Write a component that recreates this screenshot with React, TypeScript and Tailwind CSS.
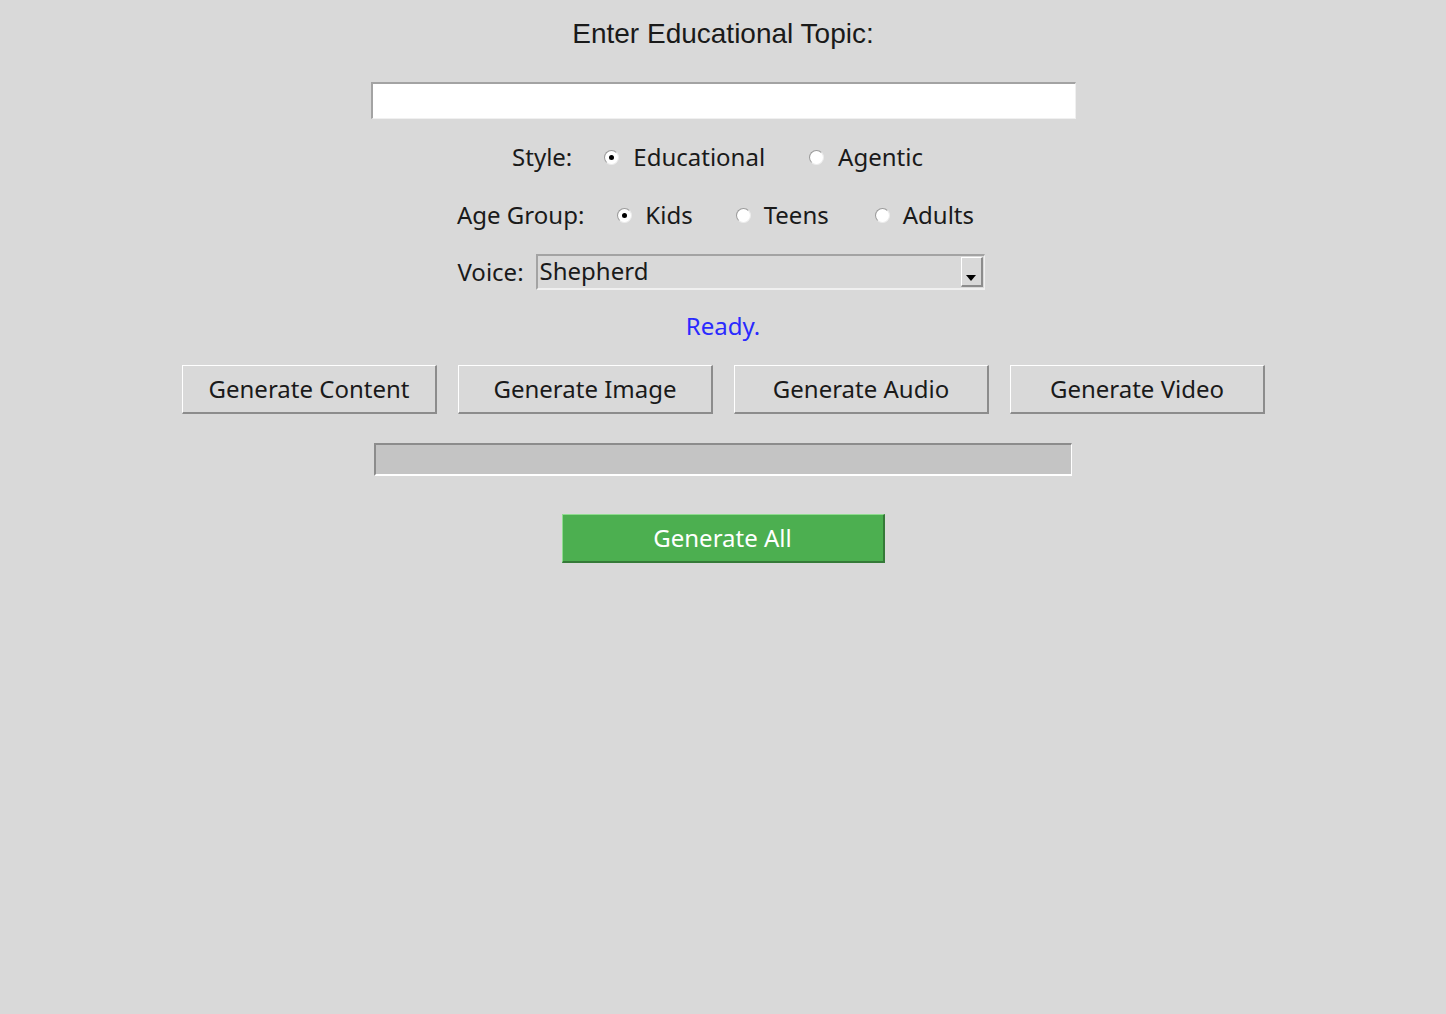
import React from "react";

const Radio = ({ checked }: { checked?: boolean }) => (
  <span className="relative inline-block w-[15px] h-[15px] rounded-full bg-white border border-t-[#9a9a9a] border-l-[#9a9a9a] border-r-[#ececec] border-b-[#ececec]">
    {checked && <span className="absolute left-[4px] top-[4px] w-[5px] h-[5px] rounded-full bg-black" />}
  </span>
);

const Btn = ({ label }: { label: string }) => (
  <div className="w-[255px] h-[49px] flex items-center justify-center bg-[#d9d9d9] border-t border-l border-t-white border-l-white border-r-2 border-b-2 border-r-[#8c8c8c] border-b-[#8c8c8c] text-[24px] text-[#1a1a1a]">
    {label}
  </div>
);

export default function App() {
  return (
    <div
      className="w-[1446px] h-[1014px] bg-[#d9d9d9] flex flex-col items-center text-[#1a1a1a]"
      style={{ fontFamily: '"Noto Sans", sans-serif' }}
    >
      <div
        className="mt-[17px] h-[34px] leading-[34px] text-[28px] text-[#1a1a1a]"
        style={{ fontFamily: '"Liberation Sans", Arial, sans-serif' }}
      >
        Enter Educational Topic:
      </div>
      <div className="mt-[31px] w-[705px] h-[37px] bg-white border-t-2 border-l-2 border-t-[#a3a3a3] border-l-[#a3a3a3] border-b border-r border-b-[#f0f0f0] border-r-[#f0f0f0]" />
      <div className="mt-[21px] h-[34px] flex items-center text-[24px] ml-[-11px]">
        <span>Style:</span>
        <span className="ml-[32px] flex items-center"><Radio checked /></span>
        <span className="ml-[14px]">Educational</span>
        <span className="ml-[44px] flex items-center"><Radio /></span>
        <span className="ml-[14px]">Agentic</span>
      </div>
      <div className="mt-[24px] h-[34px] flex items-center text-[24px] ml-[-15px]">
        <span>Age Group:</span>
        <span className="ml-[33px] flex items-center"><Radio checked /></span>
        <span className="ml-[13px]">Kids</span>
        <span className="ml-[43px] flex items-center"><Radio /></span>
        <span className="ml-[13px]">Teens</span>
        <span className="ml-[46px] flex items-center"><Radio /></span>
        <span className="ml-[13px]">Adults</span>
      </div>
      <div className="mt-[22px] flex items-center text-[24px] ml-[-4px]">
        <span>Voice:</span>
        <div className="ml-[12px] w-[449px] h-[36px] flex items-stretch bg-[#d9d9d9] border-t-2 border-l-2 border-t-[#a3a3a3] border-l-[#a3a3a3] border-b-2 border-r border-b-[#f0f0f0] border-r-[#f0f0f0]">
          <div className="flex-1 pl-[2px] leading-[30px]">Shepherd</div>
          <div className="w-[22px] my-[1px] mr-[1px] flex items-end justify-center pb-[4px] border-l border-t border-l-white border-t-white border-r-2 border-b-2 border-r-[#8c8c8c] border-b-[#8c8c8c]">
            <svg width="10" height="6" viewBox="0 0 10 6"><path d="M0 0h10L5 6z" fill="#000" /></svg>
          </div>
        </div>
      </div>
      <div className="mt-[19px] h-[34px] leading-[34px] text-[24px] text-[#2a2aff]">Ready.</div>
      <div className="mt-[22px] flex gap-[21px] ml-[1px]">
        <Btn label="Generate Content" />
        <Btn label="Generate Image" />
        <Btn label="Generate Audio" />
        <Btn label="Generate Video" />
      </div>
      <div className="mt-[29px] w-[698px] h-[33px] bg-[#c4c4c4] border-t-2 border-l-2 border-t-[#8c8c8c] border-l-[#8c8c8c] border-b-2 border-r border-b-white border-r-white" />
      <div className="mt-[38px] w-[323px] h-[49px] flex items-center justify-center bg-[#4caf50] border-t border-l border-t-[#8fdc8f] border-l-[#8fdc8f] border-r-2 border-b-2 border-r-[#357a38] border-b-[#357a38] text-[24px] text-white">
        Generate All
      </div>
    </div>
  );
}
